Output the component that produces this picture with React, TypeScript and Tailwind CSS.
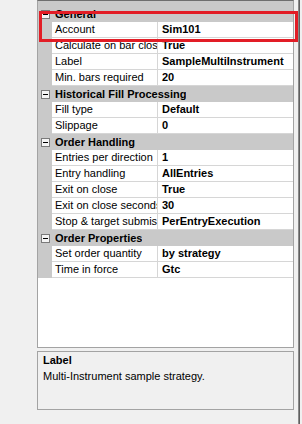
const sections = [
  {
    title: 'General',
    rows: [
      ['Account', 'Sim101'],
      ['Calculate on bar close', 'True'],
      ['Label', 'SampleMultiInstrument'],
      ['Min. bars required', '20'],
    ],
  },
  {
    title: 'Historical Fill Processing',
    rows: [
      ['Fill type', 'Default'],
      ['Slippage', '0'],
    ],
  },
  {
    title: 'Order Handling',
    rows: [
      ['Entries per direction', '1'],
      ['Entry handling', 'AllEntries'],
      ['Exit on close', 'True'],
      ['Exit on close seconds', '30'],
      ['Stop & target submission', 'PerEntryExecution'],
    ],
  },
  {
    title: 'Order Properties',
    rows: [
      ['Set order quantity', 'by strategy'],
      ['Time in force', 'Gtc'],
    ],
  },
];

const Collapse = () => (
  <div className="w-[9px] h-[9px] border border-[#7a7a7a] bg-[#f4f4f4] flex items-center justify-center">
    <div className="w-[5px] h-px bg-black" />
  </div>
);

const Header = ({ title, first }: { title: string; first?: boolean }) => (
  <div className={`flex items-end bg-[#c9c9c9] ${first ? 'h-[21px]' : 'h-[16px]'}`}>
    <div className="flex h-[16px] w-full items-center">
      <div className="w-[14px] flex justify-center shrink-0">
        <Collapse />
      </div>
      <span className="pl-[3px] font-bold text-black whitespace-nowrap overflow-hidden">{title}</span>
    </div>
  </div>
);

const Row = ({ name, value }: { name: string; value: string }) => (
  <div className="flex h-[16px]">
    <div className="w-[14px] shrink-0 bg-[#c9c9c9]" />
    <div className="w-[106px] shrink-0 bg-white border-b border-r border-[#d6d6d6] pl-[3px] overflow-hidden whitespace-nowrap leading-[15px] text-black">
      {name}
    </div>
    <div className="flex-1 bg-white border-b border-[#d6d6d6] pl-[4px] overflow-hidden whitespace-nowrap leading-[15px] font-bold text-black">
      {value}
    </div>
  </div>
);

export default function App() {
  return (
    <div className="relative w-[302px] h-[424px] overflow-hidden bg-[#f0f0f0] font-['Liberation_Sans',Arial,sans-serif] text-[11px]">
      <div className="flex h-full">
        <div className="w-[37px] shrink-0" />

        <div className="w-[257px] shrink-0 flex flex-col">
          {/* property grid */}
          <div className="h-[348px] border border-[#a3a3a3] border-t-[#6e6e6e] bg-white overflow-hidden">
            {sections.map((s, i) => (
              <div key={s.title}>
                <Header title={s.title} first={i === 0} />
                {s.rows.map(([n, v]) => (
                  <Row key={n} name={n} value={v} />
                ))}
              </div>
            ))}
          </div>

          {/* description */}
          <div className="mt-[3px] h-[59px] border border-[#a3a3a3] bg-[#f0f0f0] px-[5px] leading-[16px] text-black">
            <div className="font-bold">Label</div>
            <div>Multi-Instrument sample strategy.</div>
          </div>
        </div>

        <div className="w-[4px] shrink-0" />
        <div className="w-px shrink-0 bg-[#8a8a8a]" />
        <div className="w-px shrink-0 bg-[#5f5f5f]" />
      </div>

      {/* highlight annotation */}
      <div className="absolute left-[39px] top-[11px] w-[259px] h-[31px] border-[3px] border-[#e21d26]" />
    </div>
  );
}
